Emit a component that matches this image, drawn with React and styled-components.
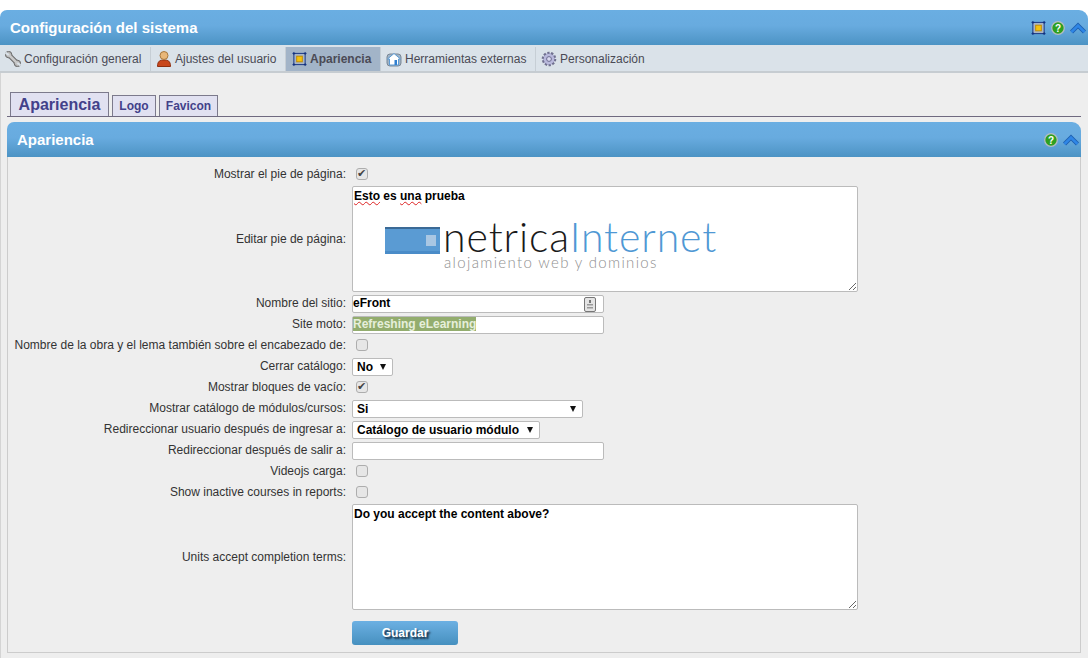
import React from 'react';
import styled, { createGlobalStyle } from 'styled-components';

const GlobalStyle = createGlobalStyle`
  html, body { margin: 0; padding: 0; background: #fff; }
  body { font-family: "Liberation Sans", Arial, sans-serif; font-size: 12px; color: #333; overflow: hidden; }
`;

const Page = styled.div`
  width: 1088px;
  height: 658px;
  padding-top: 10px;
  box-sizing: border-box;
  overflow: hidden;
`;

const Header = styled.div`
  display: flex;
  align-items: center;
  justify-content: space-between;
  box-sizing: border-box;
  height: 35px;
  padding: 0 2px 0 10px;
  background: linear-gradient(to bottom, #6aaee2 0%, #68abdf 45%, #4c93c4 100%);
  border-radius: 7px 9px 0 0;
  color: #fff;
  font-size: 15px;
  font-weight: bold;
`;

const HeaderIcons = styled.div`
  display: flex;
  align-items: center;
  gap: 5px;
`;

const Nav = styled.div`
  display: flex;
  align-items: center;
  box-sizing: border-box;
  height: 28px;
  padding: 2px 0 1px;
  background: #dae2e9;
  border-bottom: 2px solid #c6ccd1;
`;

const NavItem = styled.div`
  display: flex;
  align-items: center;
  gap: 3px;
  box-sizing: border-box;
  width: ${({ $w }) => $w}px;
  height: 24px;
  padding-left: ${({ $pad }) => $pad ?? 5}px;
  color: #4a4a55;
  font-weight: ${({ $active }) => ($active ? 'bold' : 'normal')};
  background: ${({ $active }) => ($active ? '#a2b4c8' : 'transparent')};
  border-right: 1px solid ${({ $plain }) => ($plain ? 'transparent' : '#c6ced5')};
`;

const Content = styled.div`
  height: 585px;
  box-sizing: border-box;
  padding: 18px 7px 0;
  background: #eeeeee;
  border-left: 1px solid #d4d4d4;
`;

const Tabs = styled.div`
  display: flex;
  align-items: flex-end;
  gap: 3px;
  height: 26px;
  padding-left: 3px;
  margin-left: -1px;
  border-bottom: 1px solid #6f6a80;
  box-sizing: border-box;
`;

const Tab = styled.div`
  display: flex;
  align-items: center;
  justify-content: center;
  box-sizing: border-box;
  width: ${({ $w }) => $w}px;
  height: ${({ $active }) => ($active ? '24px' : '21px')};
  background: #e1e1f1;
  border: 1px solid #7c7a8c;
  border-bottom: none;
  color: #43418a;
  font-weight: bold;
  font-size: ${({ $active }) => ($active ? '16px' : '12px')};
`;

const Panel = styled.div`
  margin: 5px 0 0 -1px;
  width: 1074px;
`;

const PanelBody = styled.div`
  box-sizing: border-box;
  height: 496px;
  padding-top: 8px;
  border: 1px solid #cccccc;
  border-top: none;
`;

const Row = styled.div`
  display: flex;
  align-items: center;
  gap: 6px;
  box-sizing: border-box;
  height: ${({ $h }) => $h ?? 21}px;
  padding: 1px 0 2px;
  margin-top: ${({ $mt }) => $mt ?? 0}px;
`;

const Label = styled.div`
  width: 338px;
  padding-bottom: ${({ $flat }) => ($flat ? 0 : 2)}px;
  text-align: right;
  white-space: nowrap;
  color: #333;
`;

const Check = styled.input.attrs({ type: 'checkbox', readOnly: true })`
  appearance: none;
  position: relative;
  width: 12px;
  height: 12px;
  margin: 0 0 2px 4px;
  background: #e6e6e6;
  border: 1px solid #adadad;
  border-radius: 3px;

  &:checked::after {
    content: "✔";
    position: absolute;
    left: 0;
    top: -2px;
    font: 11px "DejaVu Sans", sans-serif;
    color: #444;
  }
`;

const Editor = styled.div`
  box-sizing: border-box;
  width: 506px;
  height: 106px;
  padding: 2px 1px;
  background: #fff;
  border: 1px solid #bbbbbb;
  border-radius: 2px;
  color: #000;
  font-weight: bold;
  overflow: auto;
  resize: both;
`;

const Misspelled = styled.span`
  text-decoration: underline wavy #d22;
  text-decoration-thickness: 1px;
  text-underline-offset: 1px;
`;

const Logo = styled.div`
  display: flex;
  gap: 3px;
  margin: 18px 0 0 31px;
  font-weight: normal;
`;

const LogoBar = styled.div`
  position: relative;
  box-sizing: border-box;
  width: 55px;
  height: 27px;
  margin-top: 6px;
  background: #5a9bd3;
  border-top: 2px solid #3b6a96;
  border-bottom: 3px solid #4a8cc8;
`;

const LogoSquare = styled.div`
  position: absolute;
  right: 4px;
  top: 6px;
  width: 10px;
  height: 11px;
  background: #a9c7e3;
`;

const LogoText = styled.div`
  font-family: Lato, "Open Sans", sans-serif;
  font-weight: 300;
  line-height: 1;
`;

const LogoName = styled.div`
  font-size: 41px;
  line-height: 32px;
  letter-spacing: 0.9px;
  color: #1a1a1a;
  white-space: nowrap;

  span { color: #4f98d4; }
`;

const LogoSub = styled.div`
  margin: 2px 0 0 1px;
  font-size: 15px;
  letter-spacing: 1.34px;
  color: #8f8f8f;
  white-space: nowrap;
`;

const TextBox = styled.div`
  position: relative;
  display: flex;
  align-items: center;
  box-sizing: border-box;
  width: 252px;
  height: 18px;
  padding-bottom: 2px;
  background: #fff;
  border: 1px solid #bbbbbb;
  border-radius: 2px;
  color: #000;
  font-weight: bold;
`;

const ContactIcon = styled.svg`
  position: absolute;
  right: 7px;
  top: 1px;
`;

const Selected = styled.span`
  background: #93ad6e;
  color: #e6efdb;
`;

const SelectBox = styled.div`
  display: flex;
  align-items: center;
  justify-content: space-between;
  box-sizing: border-box;
  width: ${({ $w }) => $w}px;
  height: 18px;
  padding: 1px 6px 1px 4px;
  background: #fff;
  border: 1px solid #bbbbbb;
  border-radius: 2px;
  color: #000;
  font-weight: bold;
`;

const Arrow = styled.i`
  width: 0;
  height: 0;
  border-left: 3px solid transparent;
  border-right: 3px solid transparent;
  border-top: 6px solid #111;
`;

const Area = styled.textarea`
  box-sizing: border-box;
  width: 506px;
  height: 106px;
  padding: 2px 1px;
  margin: 0;
  background: #fff;
  border: 1px solid #bbbbbb;
  border-radius: 2px;
  color: #000;
  font: bold 12px "Liberation Sans", Arial, sans-serif;
`;

const Button = styled.button`
  width: 106px;
  height: 24px;
  margin: 0;
  padding: 0;
  background: linear-gradient(to bottom, #6cb0e3, #4690bf);
  border: none;
  border-radius: 3px;
  color: #fff;
  font: bold 12px "Liberation Sans", Arial, sans-serif;
  text-shadow: 2px 2px 2px #123;
`;

const Wrench = () => (
  <svg width="16" height="16" viewBox="0 0 16 16">
    <path d="M3.5 3.5 L12.5 12.5" stroke="#6a6a6a" strokeWidth="4.6" strokeLinecap="round" />
    <circle cx="3.6" cy="3.6" r="3.2" fill="#b5b5b5" stroke="#6a6a6a" strokeWidth="1" />
    <circle cx="12.4" cy="12.4" r="3.2" fill="#b5b5b5" stroke="#6a6a6a" strokeWidth="1" />
    <path d="M3.5 3.5 L12.5 12.5" stroke="#c9c9c9" strokeWidth="2.6" strokeLinecap="round" />
    <path d="M0.5 1.5 L3.5 4" stroke="#dae2e9" strokeWidth="2" />
    <path d="M12.5 12 L15.5 14.5" stroke="#dae2e9" strokeWidth="2" />
  </svg>
);

const UserIcon = () => (
  <svg width="16" height="18" viewBox="0 0 16 18">
    <path d="M1.5 16.5 C1.5 11 4 10 8 10 C12 10 14.5 11 14.5 16.5 Z" fill="#c8471c" stroke="#8f2f10" strokeWidth="1" />
    <circle cx="8" cy="5.5" r="4" fill="#e8b779" stroke="#a8793f" strokeWidth="1" />
  </svg>
);

const FrameIcon = () => (
  <svg width="15" height="16" viewBox="0 0 16 16">
    <rect x="2" y="2" width="12" height="12" fill="#a8b5c6" stroke="#12307f" strokeWidth="1" />
    <rect x="5" y="5" width="6" height="6" fill="#f4c20d" stroke="#c08a00" strokeWidth="1" />
    <path d="M0.5 2h3M2 0.5v3M12.5 2h3M14 0.5v3M0.5 14h3M2 12.5v3M12.5 14h3M14 12.5v3" stroke="#12307f" strokeWidth="1" />
  </svg>
);

const HomeIcon = () => (
  <svg width="16" height="16" viewBox="0 0 16 16">
    <rect x="1" y="3" width="14" height="12" rx="3" fill="#9fb4c8" stroke="#7b8794" strokeWidth="1" />
    <path d="M1.5 8 L8 2.5 L14.5 8 L12.5 8 L12.5 14 L3.5 14 L3.5 8 Z" fill="#fff" stroke="#5b9bd5" strokeWidth="1" strokeLinejoin="round" />
    <rect x="8.5" y="9" width="2.5" height="5" fill="#2f7fd0" />
  </svg>
);

const GearIcon = () => (
  <svg width="16" height="16" viewBox="0 0 16 16">
    <circle cx="8" cy="8" r="6" fill="#a9a9d2" stroke="#70708f" strokeWidth="2.6" strokeDasharray="2.2 1.5" />
    <circle cx="8" cy="8" r="5.3" fill="#b9b9dc" />
    <circle cx="8" cy="8" r="2.4" fill="#dadaf0" stroke="#6c6c90" strokeWidth="1" />
  </svg>
);

const HelpIcon = () => (
  <svg width="14" height="14" viewBox="0 0 14 14">
    <circle cx="7" cy="7" r="6.3" fill="#2ea01f" stroke="#b4bcc2" strokeWidth="1.3" />
    <text x="7" y="10.6" textAnchor="middle" fontFamily="Liberation Sans" fontWeight="bold" fontSize="10" fill="#fff">?</text>
  </svg>
);

const Chevron = () => (
  <svg width="16" height="12" viewBox="0 0 16 12">
    <path d="M1.5 10 L8 3.5 L14.5 10" fill="none" stroke="#1e5fae" strokeWidth="4.4" strokeLinejoin="miter" />
    <path d="M1.5 10 L8 3.5 L14.5 10" fill="none" stroke="#2f86e6" strokeWidth="2.6" strokeLinejoin="miter" />
  </svg>
);

const ContactCard = () => (
  <ContactIcon width="12" height="15" viewBox="0 0 12 15">
    <rect x="0.5" y="0.5" width="11" height="14" rx="1.5" fill="#e4e4e4" stroke="#777" />
    <rect x="5" y="3" width="2" height="3" fill="#777" />
    <rect x="3" y="7" width="6" height="1.5" fill="#999" />
    <rect x="3" y="10" width="6" height="1.5" fill="#999" />
  </ContactIcon>
);

const navItems = [
  { label: 'Configuración general', icon: <Wrench />, w: 151 },
  { label: 'Ajustes del usuario', icon: <UserIcon />, w: 135 },
  { label: 'Apariencia', icon: <FrameIcon />, w: 95, active: true, pad: 6 },
  { label: 'Herramientas externas', icon: <HomeIcon />, w: 155 },
  { label: 'Personalización', icon: <GearIcon />, w: 200, plain: true },
];

const App = () => (
  <Page>
    <GlobalStyle />
    <Header>
      Configuración del sistema
      <HeaderIcons>
        <FrameIcon />
        <HelpIcon />
        <Chevron />
      </HeaderIcons>
    </Header>
    <Nav>
      {navItems.map((item) => (
        <NavItem key={item.label} $w={item.w} $active={item.active} $pad={item.pad} $plain={item.plain}>
          {item.icon}
          {item.label}
        </NavItem>
      ))}
    </Nav>
    <Content>
      <Tabs>
        <Tab $active $w={99}>Apariencia</Tab>
        <Tab $w={44}>Logo</Tab>
        <Tab $w={59}>Favicon</Tab>
      </Tabs>
      <Panel>
        <Header>
          Apariencia
          <HeaderIcons>
            <HelpIcon />
            <Chevron />
          </HeaderIcons>
        </Header>
        <PanelBody>
          <Row>
            <Label>Mostrar el pie de página:</Label>
            <Check defaultChecked />
          </Row>
          <Row $h={109} $mt={-1}>
            <Label $flat>Editar pie de página:</Label>
            <Editor>
              <Misspelled>Esto</Misspelled> es <Misspelled>una</Misspelled> prueba
              <Logo>
                <LogoBar><LogoSquare /></LogoBar>
                <LogoText>
                  <LogoName>netrica<span>Internet</span></LogoName>
                  <LogoSub>alojamiento web y dominios</LogoSub>
                </LogoText>
              </Logo>
            </Editor>
          </Row>
          <Row>
            <Label>Nombre del sitio:</Label>
            <TextBox>eFront<ContactCard /></TextBox>
          </Row>
          <Row>
            <Label>Site moto:</Label>
            <TextBox><Selected>Refreshing eLearning</Selected></TextBox>
          </Row>
          <Row>
            <Label>Nombre de la obra y el lema también sobre el encabezado de:</Label>
            <Check />
          </Row>
          <Row>
            <Label>Cerrar catálogo:</Label>
            <SelectBox $w={41}>No<Arrow /></SelectBox>
          </Row>
          <Row>
            <Label>Mostrar bloques de vacío:</Label>
            <Check defaultChecked />
          </Row>
          <Row>
            <Label>Mostrar catálogo de módulos/cursos:</Label>
            <SelectBox $w={231}>Si<Arrow /></SelectBox>
          </Row>
          <Row>
            <Label>Redireccionar usuario después de ingresar a:</Label>
            <SelectBox $w={188}>Catálogo de usuario módulo<Arrow /></SelectBox>
          </Row>
          <Row>
            <Label>Redireccionar después de salir a:</Label>
            <TextBox />
          </Row>
          <Row>
            <Label>Videojs carga:</Label>
            <Check />
          </Row>
          <Row>
            <Label>Show inactive courses in reports:</Label>
            <Check />
          </Row>
          <Row $h={109} $mt={-1}>
            <Label $flat>Units accept completion terms:</Label>
            <Area defaultValue="Do you accept the content above?" />
          </Row>
          <Row $h={27} $mt={8}>
            <Label />
            <Button>Guardar</Button>
          </Row>
        </PanelBody>
      </Panel>
    </Content>
  </Page>
);

export default App;
